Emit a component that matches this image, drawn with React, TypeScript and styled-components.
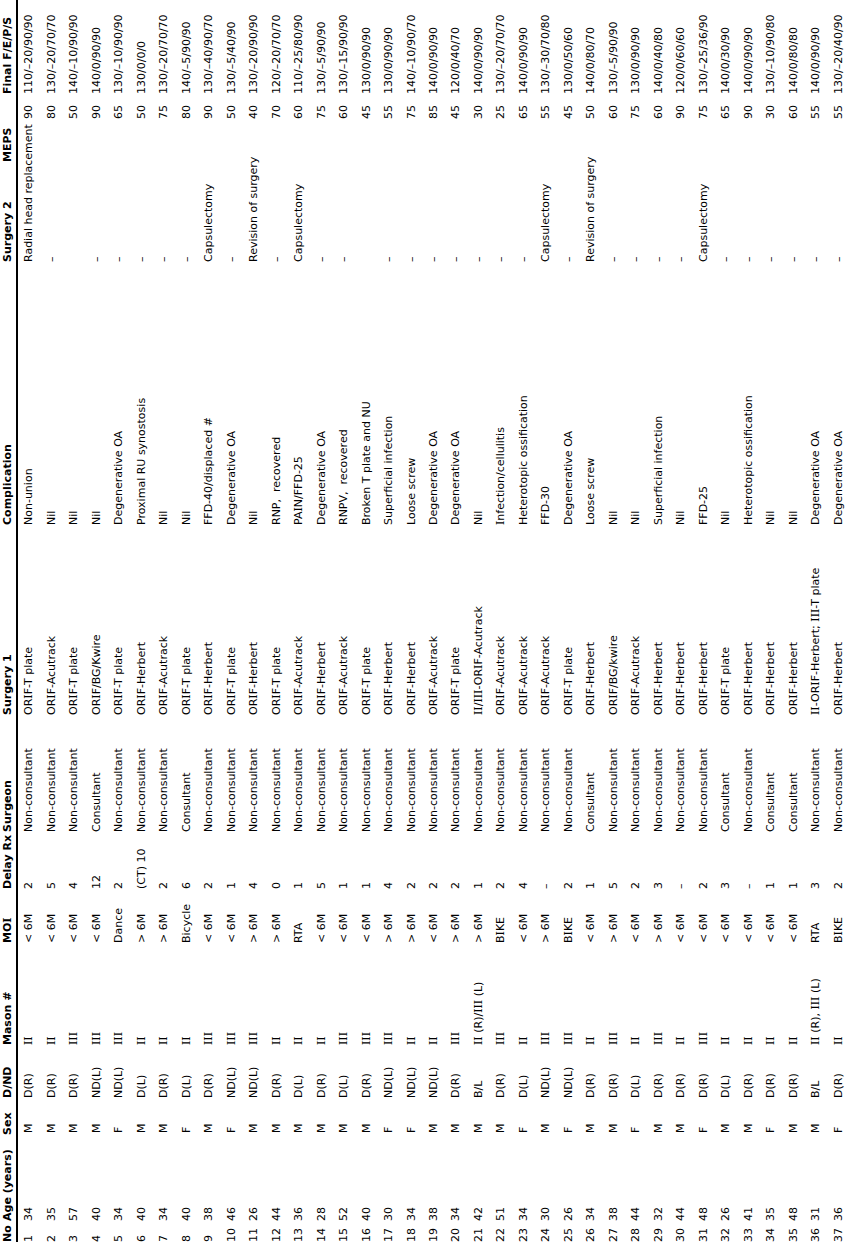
import React from "react";
import styled, { createGlobalStyle } from "styled-components";

const GlobalStyle = createGlobalStyle`
  html, body {
    margin: 0;
    padding: 0;
    background: #ffffff;
  }
  body {
    width: 850px;
    height: 1242px;
    overflow: hidden;
  }
`;

const COLUMNS = "21px 86px 37px 53px 102px 54px 57px 117px 190px 263px 100px 68px 94px";

const Page = styled.div`
  width: 850px;
  height: 1242px;
  overflow: hidden;
  background: #ffffff;
`;

const Sheet = styled.div`
  width: 1242px;
  height: 850px;
  transform-origin: 0 0;
  transform: translateY(1242px) rotate(-90deg);
  display: flex;
  flex-direction: column;
  font-family: "DejaVu Sans", Verdana, sans-serif;
  font-size: 11px;
  color: #000000;
`;

const HeaderRow = styled.div`
  display: grid;
  grid-template-columns: ${COLUMNS};
  height: 16px;
  align-items: center;
  border-bottom: 2px solid #000000;
`;

const HeadCell = styled.div`
  font-weight: bold;
  white-space: nowrap;
  line-height: 16px;
`;

const Body = styled.div`
  flex: 1;
  display: grid;
  grid-auto-rows: 1fr;
`;

const Row = styled.div`
  display: grid;
  grid-template-columns: ${COLUMNS};
  align-items: center;
`;

const Cell = styled.div<{ $indent?: number }>`
  white-space: pre;
  line-height: 14px;
  padding-left: ${(p) => p.$indent ?? 0}px;
`;

/* Capital I is drawn with serifs in the reference (Verdana-like face) */
const SerifI = styled.span`
  font-family: "DejaVu Serif", serif;
`;

function withSerifI(text: string) {
  const parts = text.split(/(I+)/);
  return parts.map((p, i) =>
    /^I+$/.test(p) ? <SerifI key={i}>{p}</SerifI> : <React.Fragment key={i}>{p}</React.Fragment>
  );
}

const headers = [
  "No",
  "Age (years)",
  "Sex",
  "D/ND",
  "Mason #",
  "MOI",
  "Delay Rx",
  "Surgeon",
  "Surgery 1",
  "Complication",
  "Surgery 2",
  "MEPS",
  "Final F/E/P/S",
];

const indents = [0, 0, 2, 0, 0, 0, 0, 0, 0, 0, 0, 43, 0];

const NC = "Non-consultant";
const C = "Consultant";
const D = "–";

const rows: string[][] = [
  ["1", "34", "M", "D(R)", "II", "< 6M", "2", NC, "ORIF-T plate", "Non-union", "Radial head replacement", "90", "110/–20/90/90"],
  ["2", "35", "M", "D(R)", "II", "< 6M", "5", NC, "ORIF-Acutrack", "Nil", D, "80", "130/–20/70/70"],
  ["3", "57", "M", "D(R)", "III", "< 6M", "4", NC, "ORIF-T plate", "Nil", "", "50", "140/–10/90/90"],
  ["4", "40", "M", "ND(L)", "III", "< 6M", "12", C, "ORIF/BG/Kwire", "Nil", D, "90", "140/0/90/90"],
  ["5", "34", "F", "ND(L)", "III", "Dance", "2", NC, "ORIF-T plate", "Degenerative OA", D, "65", "130/–10/90/90"],
  ["6", "40", "M", "D(L)", "II", "> 6M", "(CT) 10", NC, "ORIF-Herbert", "Proximal RU synostosis", D, "50", "130/0/0/0"],
  ["7", "34", "M", "D(R)", "II", "> 6M", "2", NC, "ORIF-Acutrack", "Nil", D, "75", "130/–20/70/70"],
  ["8", "40", "F", "D(L)", "II", "Bicycle", "6", C, "ORIF-T plate", "Nil", D, "80", "140/–5/90/90"],
  ["9", "38", "M", "D(R)", "III", "< 6M", "2", NC, "ORIF-Herbert", "FFD-40/displaced #", "Capsulectomy", "90", "130/–40/90/70"],
  ["10", "46", "F", "ND(L)", "III", "< 6M", "1", NC, "ORIF-T plate", "Degenerative OA", D, "50", "130/–5/40/90"],
  ["11", "26", "M", "ND(L)", "III", "> 6M", "4", NC, "ORIF-Herbert", "Nil", "Revision of surgery", "40", "130/–20/90/90"],
  ["12", "44", "M", "D(R)", "II", "> 6M", "0", NC, "ORIF-T plate", "RNP,  recovered", D, "70", "120/–20/70/70"],
  ["13", "36", "M", "D(L)", "II", "RTA", "1", NC, "ORIF-Acutrack", "PAIN/FFD-25", "Capsulectomy", "60", "110/–25/80/90"],
  ["14", "28", "M", "D(R)", "II", "< 6M", "5", NC, "ORIF-Herbert", "Degenerative OA", D, "75", "130/–5/90/90"],
  ["15", "52", "M", "D(L)", "III", "< 6M", "1", NC, "ORIF-Acutrack", "RNPV,  recovered", D, "60", "130/–15/90/90"],
  ["16", "40", "M", "D(R)", "III", "< 6M", "1", NC, "ORIF-T plate", "Broken T plate and NU", "", "45", "130/0/90/90"],
  ["17", "30", "F", "ND(L)", "III", "> 6M", "4", NC, "ORIF-Herbert", "Superficial infection", D, "55", "130/0/90/90"],
  ["18", "34", "F", "ND(L)", "II", "> 6M", "2", NC, "ORIF-Herbert", "Loose screw", D, "75", "140/–10/90/70"],
  ["19", "38", "M", "ND(L)", "II", "< 6M", "2", NC, "ORIF-Acutrack", "Degenerative OA", D, "85", "140/0/90/90"],
  ["20", "34", "M", "D(R)", "III", "> 6M", "2", NC, "ORIF-T plate", "Degenerative OA", D, "45", "120/0/40/70"],
  ["21", "42", "M", "B/L", "II (R)/III (L)", "> 6M", "1", NC, "II/III-ORIF-Acutrack", "Nil", D, "30", "140/0/90/90"],
  ["22", "51", "M", "D(R)", "III", "BIKE", "2", NC, "ORIF-Acutrack", "Infection/cellulitis", D, "25", "130/–20/70/70"],
  ["23", "34", "F", "D(L)", "II", "< 6M", "4", NC, "ORIF-Acutrack", "Heterotopic ossification", D, "65", "140/0/90/90"],
  ["24", "30", "M", "ND(L)", "III", "> 6M", D, NC, "ORIF-Acutrack", "FFD-30", "Capsulectomy", "55", "130/–30/70/80"],
  ["25", "26", "F", "ND(L)", "III", "BIKE", "2", NC, "ORIF-T plate", "Degenerative OA", D, "45", "130/0/50/60"],
  ["26", "34", "M", "D(R)", "II", "< 6M", "1", C, "ORIF-Herbert", "Loose screw", "Revision of surgery", "50", "140/0/80/70"],
  ["27", "38", "M", "D(R)", "III", "> 6M", "5", NC, "ORIF/BG/kwire", "Nil", D, "60", "130/–5/90/90"],
  ["28", "44", "F", "D(L)", "II", "< 6M", "2", NC, "ORIF-Acutrack", "Nil", D, "75", "130/0/90/90"],
  ["29", "32", "M", "D(R)", "III", "> 6M", "3", NC, "ORIF-Herbert", "Superficial infection", D, "60", "140/0/40/80"],
  ["30", "44", "M", "D(R)", "II", "< 6M", D, NC, "ORIF-Herbert", "Nil", D, "90", "120/0/60/60"],
  ["31", "48", "F", "D(R)", "III", "< 6M", "2", NC, "ORIF-Herbert", "FFD-25", "Capsulectomy", "75", "130/–25/36/90"],
  ["32", "26", "M", "D(L)", "II", "< 6M", "3", C, "ORIF-T plate", "Nil", D, "65", "140/0/30/90"],
  ["33", "41", "M", "D(R)", "II", "< 6M", D, NC, "ORIF-Herbert", "Heterotopic ossification", D, "90", "140/0/90/90"],
  ["34", "35", "F", "D(R)", "II", "< 6M", "1", C, "ORIF-Herbert", "Nil", D, "30", "130/–10/90/80"],
  ["35", "48", "M", "D(R)", "II", "< 6M", "1", C, "ORIF-Herbert", "Nil", D, "60", "140/0/80/80"],
  ["36", "31", "M", "B/L", "II (R), III (L)", "RTA", "3", NC, "II-ORIF-Herbert; III-T plate", "Degenerative OA", D, "55", "140/0/90/90"],
  ["37", "36", "F", "D(R)", "II", "BIKE", "2", NC, "ORIF-Herbert", "Degenerative OA", D, "55", "130/–20/40/90"],
];

export default function App() {
  return (
    <Page>
      <GlobalStyle />
      <Sheet>
        <HeaderRow>
          {headers.map((h) => (
            <HeadCell key={h}>{withSerifI(h)}</HeadCell>
          ))}
        </HeaderRow>
        <Body>
          {rows.map((r) => (
            <Row key={r[0]}>
              {r.map((v, i) => (
                <Cell key={i} $indent={indents[i]}>
                  {withSerifI(v)}
                </Cell>
              ))}
            </Row>
          ))}
        </Body>
      </Sheet>
    </Page>
  );
}
